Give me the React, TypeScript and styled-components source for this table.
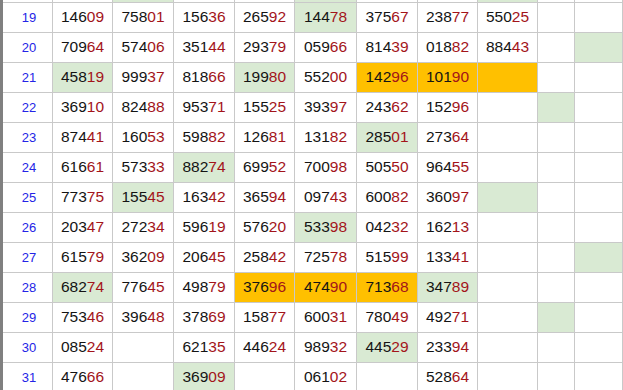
import React from "react";
import styled, { createGlobalStyle } from "styled-components";

const GlobalStyle = createGlobalStyle`
    html, body {
        margin: 0;
        padding: 0;
        background: #ffffff;
        overflow: hidden;
    }
`;

type Fill = "none" | "green" | "orange";

const fills: Record<Fill, string> = {
    none: "#ffffff",
    green: "#d9ead3",
    orange: "#ffc000",
};

const Viewport = styled.div`
    width: 623px;
    height: 390px;
    overflow: hidden;
`;

const Sheet = styled.div`
    display: grid;
    grid-template-columns: 50px 60px 61px 61px 60px 62px 61px 60px 60px 37px 48px 60px;
    grid-template-rows: 3px repeat(13, 30px);
    border-left: 3px solid #808080;
    width: max-content;
    font-family: "Liberation Sans", Arial, sans-serif;
`;

const Cell = styled.div<{ fill: Fill }>`
    box-sizing: border-box;
    border-right: 1px solid #c9c9c9;
    border-bottom: 1px solid #c9c9c9;
    background-color: ${(props) => fills[props.fill]};
    display: flex;
    align-items: center;
    justify-content: center;
    font-size: 15.5px;
    color: #141414;
    padding-bottom: 1px;
`;

const RowNum = styled(Cell)`
    font-size: 13px;
    color: #2424e6;
    padding-left: 3px;
`;

const Tail = styled.span`
    color: #a3141a;
`;

// "g:" = green fill, "o:" = orange fill
const rows: [number, string[]][] = [
    [19, ["14609", "75801", "15636", "26592", "g:14478", "37567", "23877", "55025", "", "", ""]],
    [20, ["70964", "57406", "35144", "29379", "05966", "81439", "01882", "88443", "", "g:", ""]],
    [21, ["g:45819", "99937", "81866", "g:19980", "55200", "o:14296", "o:10190", "o:", "", "", ""]],
    [22, ["36910", "82488", "95371", "15525", "39397", "24362", "15296", "", "g:", "", ""]],
    [23, ["87441", "16053", "59882", "12681", "13182", "g:28501", "27364", "", "", "", ""]],
    [24, ["61661", "57333", "g:88274", "69952", "70098", "50550", "96455", "", "", "", "g:"]],
    [25, ["77375", "g:15545", "16342", "36594", "09743", "60082", "36097", "g:", "", "", ""]],
    [26, ["20347", "27234", "59619", "57620", "g:53398", "04232", "16213", "", "", "", ""]],
    [27, ["61579", "36209", "20645", "25842", "72578", "51599", "13341", "", "", "g:", ""]],
    [28, ["g:68274", "77645", "49879", "o:37696", "o:47490", "o:71368", "g:34789", "", "", "", ""]],
    [29, ["75346", "39648", "37869", "15877", "60031", "78049", "49271", "", "g:", "", ""]],
    [30, ["08524", "", "62135", "44624", "98932", "g:44529", "23394", "", "", "", ""]],
    [31, ["47666", "", "g:36909", "", "06102", "", "52864", "", "", "", ""]],
];

const topStrip: Fill[] = ["none", "green", "none", "none", "green", "none", "none", "green", "none", "none", "none"];

const parse = (raw: string): [Fill, string] => {
    if (raw.startsWith("g:")) return ["green", raw.slice(2)];
    if (raw.startsWith("o:")) return ["orange", raw.slice(2)];
    return ["none", raw];
};

const Value = ({ text }: { text: string }) => {
    if (!text) return null;
    return (
        <span>
            {text.slice(0, 3)}
            <Tail>{text.slice(3)}</Tail>
        </span>
    );
};

export default function App() {
    return (
        <Viewport>
            <GlobalStyle />
            <Sheet>
                <RowNum fill="none" />
                {topStrip.map((f, i) => (
                    <Cell key={"t" + i} fill={f} />
                ))}
                {rows.map(([n, cells]) => (
                    <React.Fragment key={n}>
                        <RowNum fill="none">{n}</RowNum>
                        {cells.map((raw, i) => {
                            const [fill, text] = parse(raw);
                            return (
                                <Cell key={i} fill={fill}>
                                    <Value text={text} />
                                </Cell>
                            );
                        })}
                    </React.Fragment>
                ))}
            </Sheet>
        </Viewport>
    );
}
